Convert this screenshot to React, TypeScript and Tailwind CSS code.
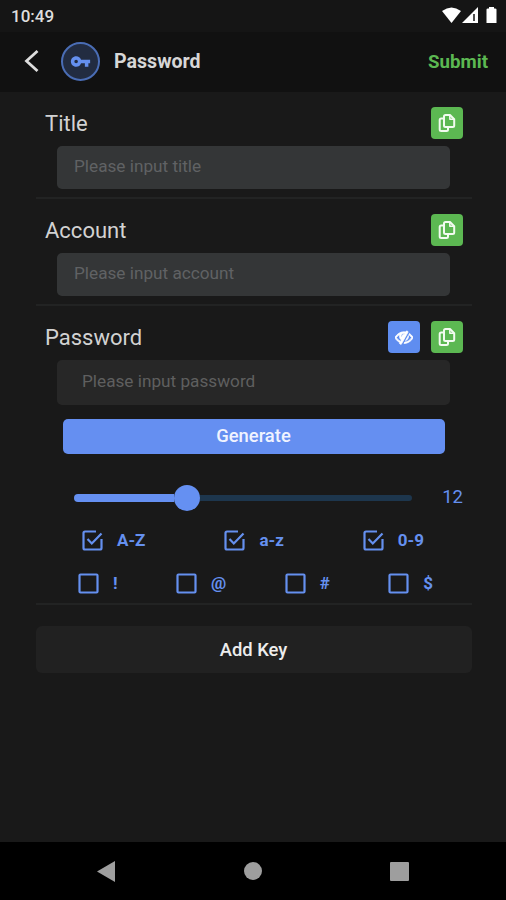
import type { ReactNode } from "react";

function CopyIcon() {
  return (
    <svg width="18" height="20" viewBox="0 0 18 20" fill="none" stroke="#f2fbf0" strokeWidth="2" strokeLinejoin="round">
      <path d="M5 5.500H3.200Q1.700 5.500 1.700 7V16.500Q1.700 18 3.200 18H8.500Q10 18 10 16.500V15" />
      <path d="M7.500 2H12L16.200 6.200V12.500Q16.200 14 14.700 14H7.500Q6 14 6 12.500V3.500Q6 2 7.500 2Z" />
      <path d="M11.800 2V6.300H16.200" strokeWidth="1.500" />
    </svg>
  );
}

function EyeOffIcon() {
  return (
    <svg width="18" height="18" viewBox="0 0 1792 1792" fill="white" stroke="white" strokeWidth="80">
      <path d="M555 1335l78-141q-87-63-136-159t-49-203q0-121 61-225-229 117-381 353 167 258 427 375zm389-759q0-20-14-34t-34-14q-125 0-214.5 89.5t-89.5 214.5q0 20 14 34t34 14 34-14 14-34q0-86 61-147t147-61q20 0 34-14t14-34zm363-191q0 7-1 9-106 189-316 567t-315 566l-49 89q-10 16-28 16-12 0-134-70-16-10-16-28 0-12 44-87-143-65-263.5-173t-208.5-245q-20-31-20-69t20-69q153-235 380-371t496-136q89 0 180 17l54-97q10-16 28-16 5 0 18 6t31 15.5 33 18.5 31.5 18.5 19.5 11.5q16 10 16 27zm37 447q0 139-79 253.5t-209 164.5l280-502q8 45 8 84zm448 128q0 35-20 69-39 64-109 145-150 172-347.5 267t-419.5 95l74-132q212-18 392.5-137t301.5-307q-115-179-282-294l63-112q95 64 182.5 153t144.5 184q20 34 20 69z" />
    </svg>
  );
}

function CopyButton() {
  return (
    <button className="flex size-8 items-center justify-center rounded-[4px] bg-[#5cb852]">
      <CopyIcon />
    </button>
  );
}

function Field({ label, children, actions }: { label: string; children: ReactNode; actions?: ReactNode }) {
  return (
    <section className="mr-[34px] ml-9 border-b-2 border-[#222323] pt-[15px]">
      <div className="flex h-8 items-center justify-between pr-[9px] pl-[9px]">
        <h2 className="pt-px text-[22px] leading-8 text-[#d2d2d2]">{label}</h2>
        <div className="flex gap-[11px]">
          {actions}
          <CopyButton />
        </div>
      </div>
      {children}
    </section>
  );
}

function Check({ label, checked }: { label: string; checked?: boolean }) {
  return (
    <label className="flex items-center gap-[14px] text-[17px] leading-6 font-bold text-[#6590ef]">
      <svg width="21" height="21" viewBox="0 0 21 21" fill="none" stroke="currentColor" strokeWidth="2.2">
        {checked ? (
          <>
            <path d="M14 1.500H3Q1.500 1.500 1.500 3V18Q1.500 19.500 3 19.500H18Q19.500 19.500 19.500 18V9" />
            <path d="M5.500 9L9.800 13.500L19.500 3.500" />
          </>
        ) : (
          <rect x="1.5" y="1.5" width="18" height="18" rx="1" />
        )}
      </svg>
      <span>{label}</span>
    </label>
  );
}

export default function App() {
  return (
    <div className="flex h-[900px] w-[506px] flex-col bg-[#191919] font-[Roboto,sans-serif]">
      <div className="flex h-8 shrink-0 items-center justify-between bg-[#151515] pr-[8px] pl-[11px]">
        <span className="pt-px text-[17px] font-medium text-[#dedede]">10:49</span>
        <svg width="56" height="18" viewBox="0 0 56 18" fill="white">
          <path d="M0 4Q9.500 -3 19 4L9.500 16Z" />
          <path d="M20 16L36 0V16Z" />
          <path d="M32 7V14" stroke="#151515" strokeWidth="1.500" />
          <path d="M44.500 2.500Q44.500 1.500 46 1.500H47V0H52V1.500H53Q54.500 1.500 54.500 2.500V16H44.500Z" />
        </svg>
      </div>
      <header className="flex h-[60px] shrink-0 items-center bg-[#111111] pr-[18px] pb-[2px] pl-6">
        <svg width="16" height="24" viewBox="0 0 16 24" fill="none" stroke="#dedede" strokeWidth="2.800">
          <path d="M13.500 2L2.500 12L13.500 22" />
        </svg>
        <div className="ml-[21px] flex size-[39px] items-center justify-center rounded-full border-2 border-[#4a6db5] bg-[#222c41]">
          <svg width="21" height="21" viewBox="0 0 24 24" fill="#6590ef">
            <path d="M12.650 10A5.990 5.990 0 0 0 7 6c-3.310 0-6 2.690-6 6s2.690 6 6 6a5.990 5.990 0 0 0 5.650-4H17v4h4v-4h2v-4H12.650zM7 14c-1.100 0-2-.9-2-2s.9-2 2-2 2 .9 2 2-.9 2-2 2z" />
          </svg>
        </div>
        <h1 className="ml-[14px] pt-[2px] text-[19.600px] font-bold text-[#d7d7d7]">Password</h1>
        <button className="ml-auto pt-[2px] text-[18.700px] font-bold text-[#5cb852]">Submit</button>
      </header>

      <Field label="Title">
        <div className="mr-[22px] ml-[21px] mt-[7px] mb-[8px] flex h-[43px] items-center rounded-[5px] bg-[#343637] pb-[2px] pl-[17px] text-[17.200px] text-[#606264]">
          Please input title
        </div>
      </Field>
      <Field label="Account">
        <div className="mr-[22px] ml-[21px] mt-[7px] mb-[8px] flex h-[43px] items-center rounded-[5px] bg-[#343637] pb-[2px] pl-[17px] text-[17.200px] text-[#606264]">
          Please input account
        </div>
      </Field>
      <Field
        label="Password"
        actions={
          <button className="flex size-8 items-center justify-center rounded-[4px] bg-[#5f8df0]">
            <EyeOffIcon />
          </button>
        }
      >
        <div className="mr-[22px] ml-[21px] mt-[7px] flex h-[45px] items-center rounded-[5px] bg-[#272727] pb-[2px] pl-[25px] text-[17.200px] text-[#5f5f5f]">
          Please input password
        </div>
        <button className="mx-[27px] mt-[14px] flex h-[35px] w-[382px] items-center justify-center rounded-[5px] bg-[#658ff1] pr-px pb-px text-[18.400px] font-medium text-[#f0f3ff]">
          Generate
        </button>
        <div className="mt-[31px] flex h-[26px] items-center pr-[9px] pl-[38px]">
          <div className="h-2 w-[100px] rounded-l-full bg-[#6590f2]" />
          <div className="size-[26px] rounded-full bg-[#6590f2]" />
          <div className="h-[6px] w-[212px] rounded-r-full bg-[#1d364d]" />
          <span className="ml-auto text-[18.500px] text-[#6590ef]">12</span>
        </div>
        <div className="mt-[17px] flex h-6 justify-between pr-[48px] pl-[46px]">
          <Check label="A-Z" checked />
          <Check label="a-z" checked />
          <Check label="0-9" checked />
        </div>
        <div className="mt-[19px] mb-[8px] flex h-6 justify-between pr-[39px] pl-[42px]">
          <Check label="!" />
          <Check label="@" />
          <Check label="#" />
          <Check label="$" />
        </div>
      </Field>

      <button className="mr-[34px] ml-9 mt-[21px] flex h-[47px] shrink-0 items-center justify-center rounded-[6px] bg-[#212121] pr-px text-[18.400px] font-medium text-[#ededed]">
        Add Key
      </button>

      <nav className="mt-auto flex h-[58px] shrink-0 items-center justify-between bg-black pr-[97px] pl-[97px]">
        <svg width="18" height="21" viewBox="0 0 18 21" fill="#9e9e9e">
          <path d="M18 0V21L0 10.500Z" />
        </svg>
        <div className="size-[18px] rounded-full bg-[#9e9e9e]" />
        <div className="size-[19px] rounded-[1px] bg-[#9e9e9e]" />
      </nav>
    </div>
  );
}
